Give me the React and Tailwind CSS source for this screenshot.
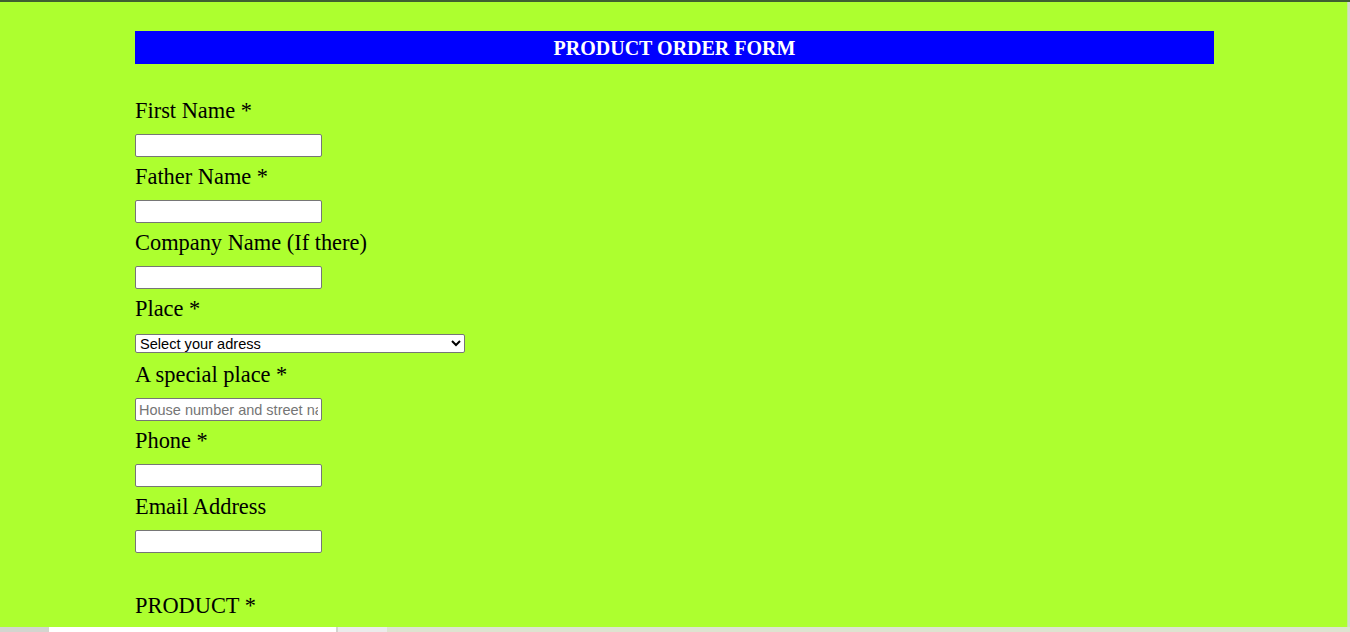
import React from 'react';

const serif = { fontFamily: '"Liberation Serif", "Times New Roman", serif' };

function Field({ label, placeholder }) {
  return (
    <div>
      <div className="text-[22.4px] leading-[28px] text-black">{label}</div>
      <input
        type="text"
        placeholder={placeholder}
        className="block w-[187px] h-[23px] mt-[9px] mb-[6px] px-[3px] bg-white border border-[#767676] rounded-[2px] text-[14.5px] font-['Liberation_Sans',Arial,sans-serif] placeholder:text-[#757575]"
      />
    </div>
  );
}

export default function App() {
  return (
    <div className="w-[1350px] h-[632px] overflow-hidden bg-[#d6d8d2]" style={serif}>
      <div className="h-[2px] bg-[#3f5f31]" />
      <div className="w-[1348px] h-[625px] bg-[#adff2f] pl-[135px] pt-[29px] border-r border-[#c8e6a0]">
        <div className="w-[1079px] h-[33px] bg-[#0000ff] flex items-center justify-center">
          <h1 className="text-white text-[20px] font-bold leading-none">PRODUCT ORDER FORM</h1>
        </div>
        <div className="pt-[33px]">
          <Field label="First Name *" />
          <Field label="Father Name *" />
          <Field label="Company Name (If there)" />
          <div>
            <div className="text-[22.4px] leading-[28px] text-black">Place *</div>
            <select className="block w-[330px] h-[19px] mt-[11px] mb-[8px] bg-white border border-[#767676] rounded-[2px] text-[14.6px] leading-none text-black font-['Liberation_Sans',Arial,sans-serif]">
              <option>Select your adress</option>
            </select>
          </div>
          <Field label="A special place *" placeholder="House number and street name" />
          <Field label="Phone *" />
          <Field label="Email Address" />
          <div className="pt-[33px] text-[22.4px] leading-[28px] text-black">PRODUCT *</div>
        </div>
      </div>
      <div className="flex h-[5px]">
        <div className="w-[49px] bg-[#d3d5cf]" />
        <div className="w-[287px] bg-white" />
        <div className="w-[2px] bg-[#d3d5cf]" />
        <div className="w-[49px] bg-[#ebebeb]" />
        <div className="flex-1 bg-[#dde3d0]" />
      </div>
    </div>
  );
}
